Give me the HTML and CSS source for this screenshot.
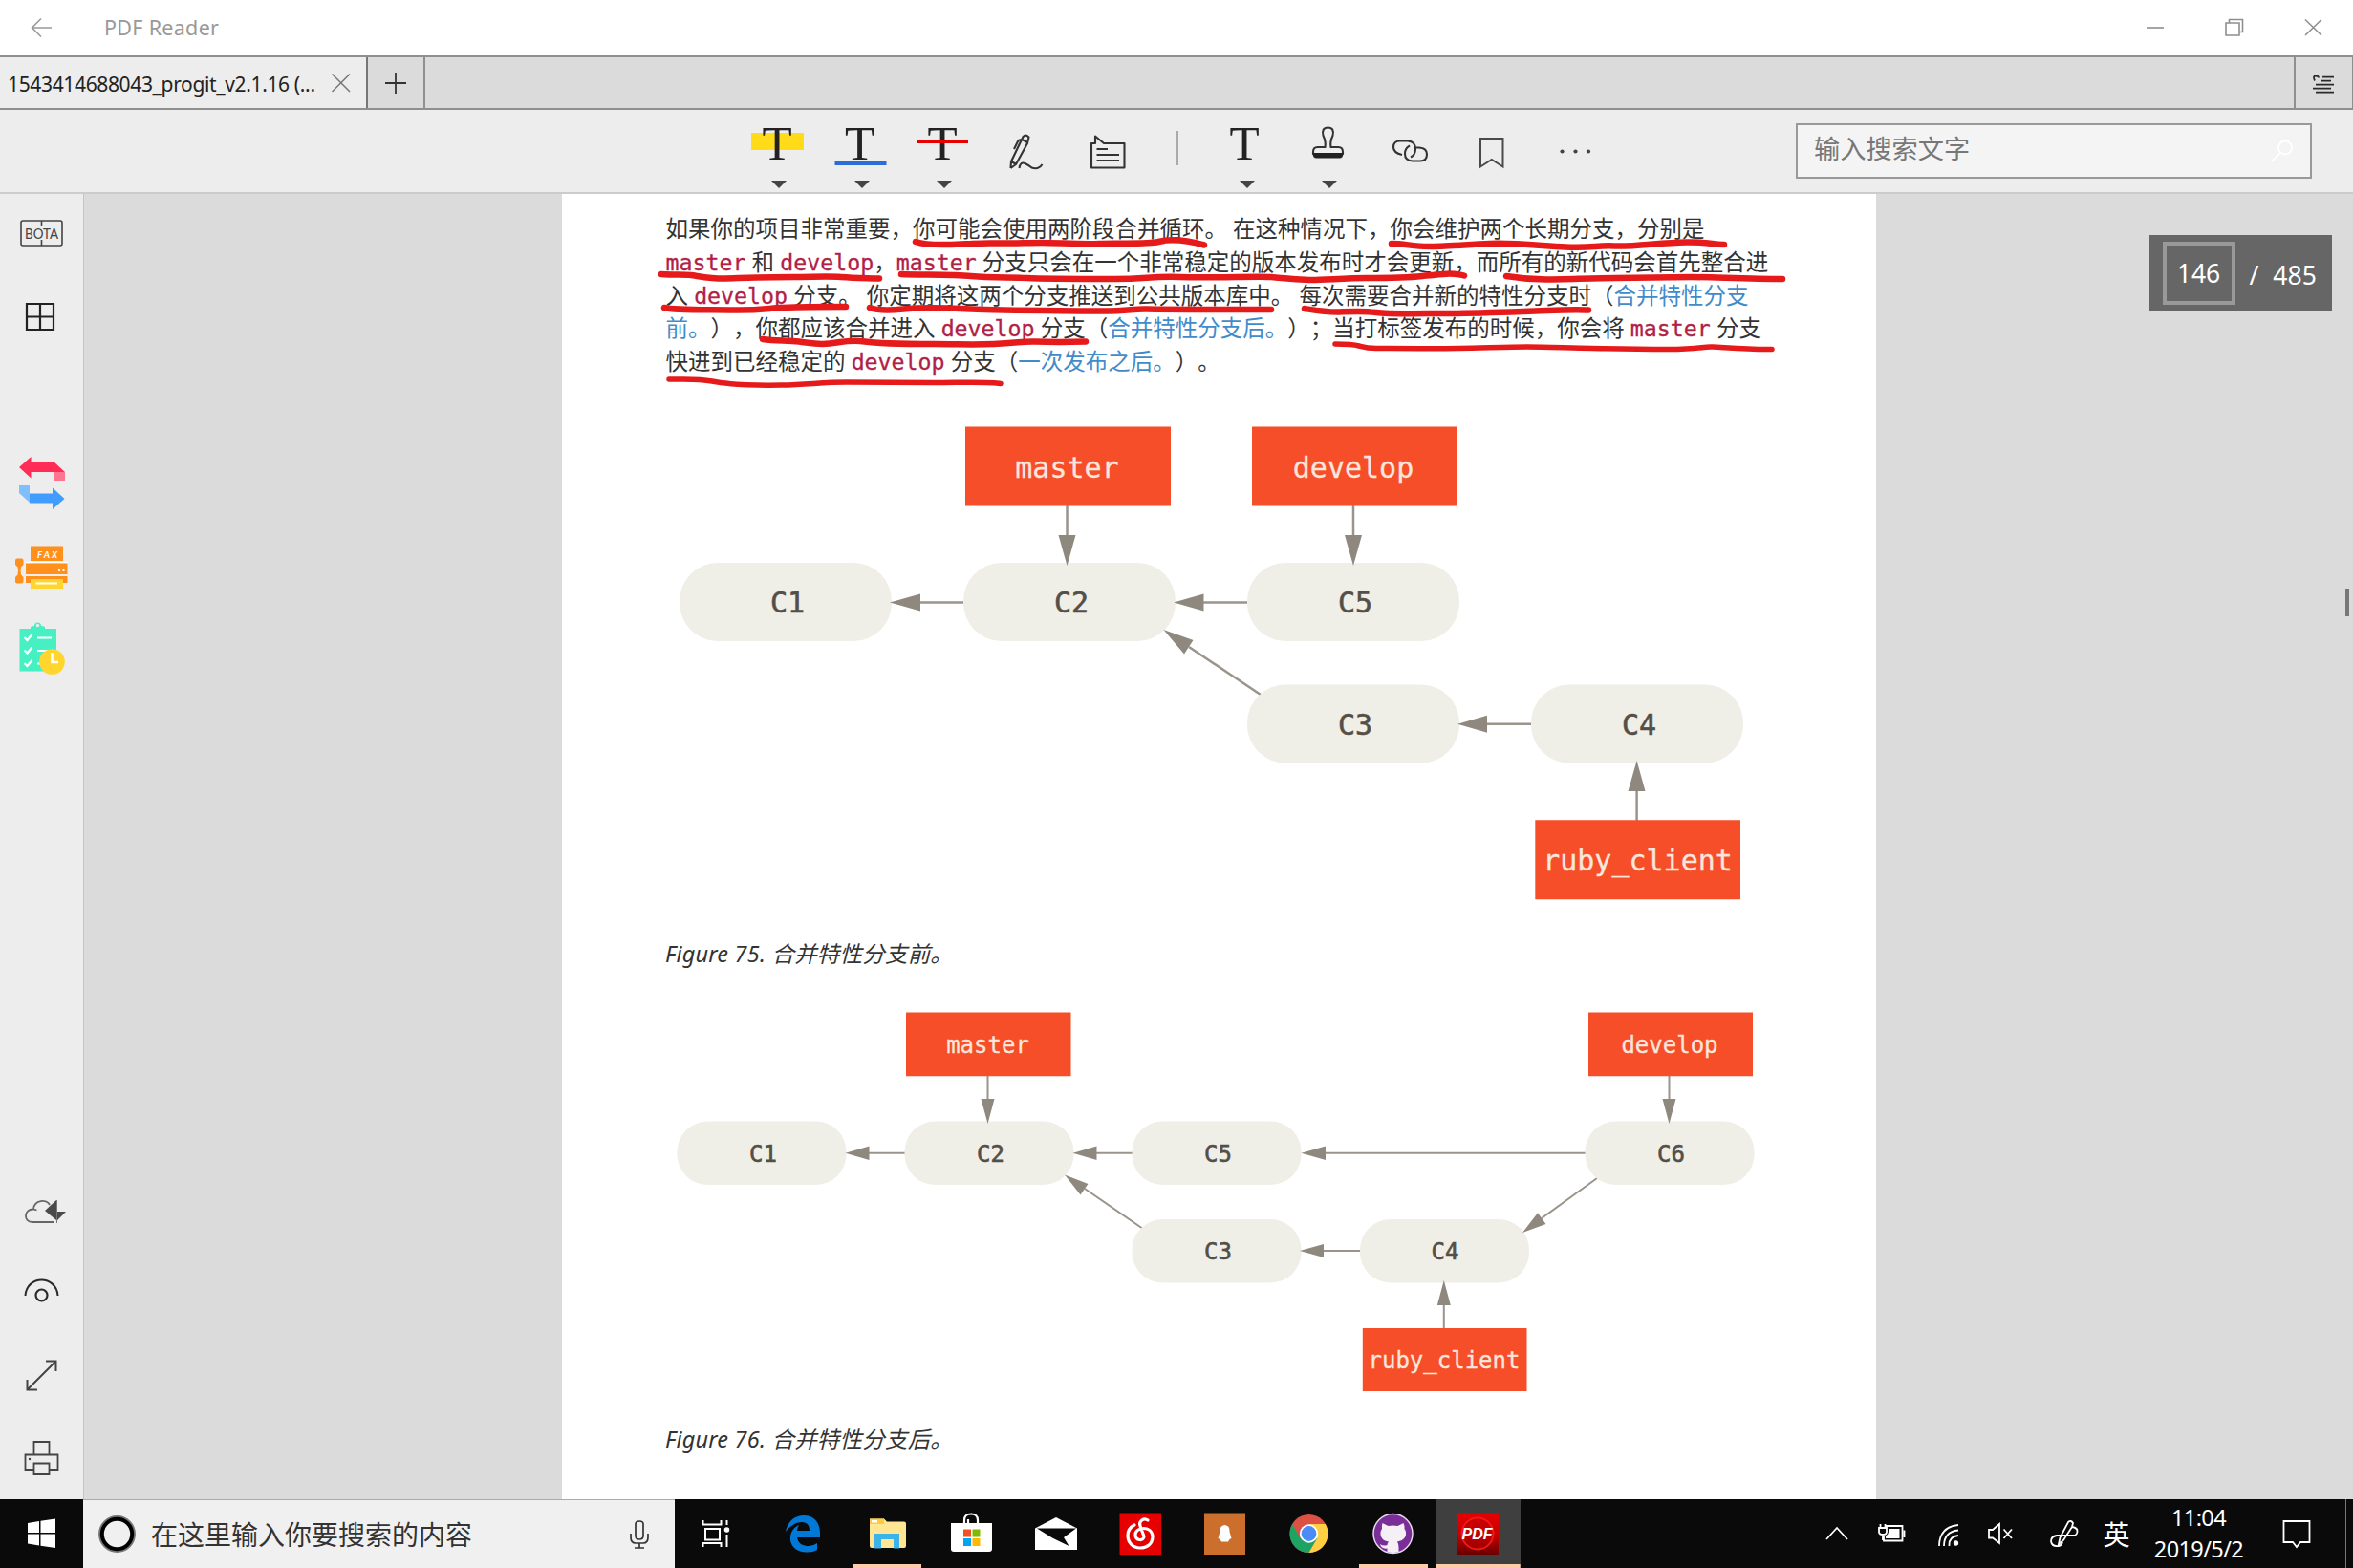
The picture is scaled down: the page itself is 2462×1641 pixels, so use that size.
FILE: index.html
```html
<!DOCTYPE html>
<html lang="zh-CN">
<head>
<meta charset="utf-8">
<title>PDF Reader</title>
<link rel="stylesheet" href="styles.css">
</head>
<body>
<div class="app">
  <header class="titlebar">
    <svg class="back" width="109" height="58" viewBox="0 0 109 58"><path d="M54 29H34M43 19.500L33.500 29L43 38.500" fill="none" stroke="#999" stroke-width="1.600"/></svg>
    <span class="app-name">PDF Reader</span>
    <svg class="window-buttons" width="246" height="58" viewBox="2216 0 246 58">
      <g fill="none" stroke="#8f8f8f" stroke-width="1.600">
        <path d="M2246 29H2264"/>
        <path d="M2329 24H2343V37H2329ZM2332.500 24V20.500H2346.500V33.500H2343"/>
        <path d="M2412 20.500L2429 37M2429 20.500L2412 37"/>
      </g>
    </svg>
  </header>

  <nav class="tabs">
    <div class="tab">
      <span class="tab-title">1543414688043_progit_v2.1.16 (...</span>
      <svg width="20" height="20" viewBox="0 0 20 20"><path d="M.5 .5L19 19M19 .5L.5 19" stroke="#777" stroke-width="1.500"/></svg>
    </div>
    <div class="tab-add"><svg width="22" height="22" viewBox="0 0 22 22"><path d="M0 11H22M11 0V22" stroke="#333" stroke-width="1.800"/></svg></div>
    <div class="tab-menu">
      <svg width="24" height="22" viewBox="2419 78 24 22"><path d="M2430 80.700H2442M2428 84.700H2439M2423 88.700H2442M2420 92.700H2439M2423 96.700H2442M2422 84.500Q2419.500 79.500 2423 79.500Q2426 79.500 2426 81.500" fill="none" stroke="#2a2a2a" stroke-width="1.800"/></svg>
    </div>
  </nav>

  <div class="toolbar">
    <svg class="tool" viewBox="771 115 86.500 87"><path d="M786 139H841V157H786Z" fill="#ffdb1a"/><text class="glyph" x="813" y="167">T</text><path class="caret" d="M807 189H823L815 197Z"/></svg>
    <svg class="tool" viewBox="857.500 115 86.500 87"><text class="glyph" x="899" y="167">T</text><path d="M873 169H927V173H873Z" fill="#2b6fd6"/><path class="caret" d="M893.500 189H909.500L901.500 197Z"/></svg>
    <svg class="tool" viewBox="944 115 86.500 87"><text class="glyph" x="986" y="167">T</text><path d="M959 146.500H1013V150H959Z" fill="#e60000"/><path class="caret" d="M980 189H996L988 197Z"/></svg>
    <svg class="tool" viewBox="1030.500 115 86.500 87"><g class="line"><path d="M1057 176L1057.500 169L1070 143Q1073 140 1076 143.500L1074.500 150L1062.500 172L1057 176M1057.500 169L1063 172M1069 146L1074.500 149M1069 146Q1065 145.500 1064 149L1060.500 156"/><path d="M1066 176Q1067 169 1072 171Q1076 173 1079 175.500Q1086 178 1090 172"/></g></svg>
    <svg class="tool" viewBox="1117 115 86.500 87"><g class="line"><path d="M1142 150H1146V142.500L1155 150H1176.500V175.500H1142Z"/><path d="M1147.500 156H1159M1147.500 162H1171M1147.500 168H1171"/></g></svg>
    <div class="tool-divider"></div>
    <svg class="tool" viewBox="1260 115 86.500 87"><text class="glyph" x="1302" y="167">T</text><path class="caret" d="M1297 189H1313L1305 197Z"/></svg>
    <svg class="tool" viewBox="1347.500 115 86.500 87"><g class="line"><path d="M1387 154Q1388 148 1385 142Q1383 133.500 1390 133.500Q1397 133.500 1395 142Q1392 148 1393 154H1401Q1405.500 154 1405.500 159V161H1374.500V159Q1374.500 154 1379 154Z"/></g><path d="M1374 160H1406Q1406 165.500 1402 165.500H1378Q1374 165.500 1374 160Z" fill="#222"/><path class="caret" d="M1383.500 189H1399.500L1391.500 197Z"/></svg>
    <svg class="tool" viewBox="1434 115 86.500 87"><g class="line"><path d="M1468 162Q1459 160 1459 154Q1459 147.500 1466 147.500H1474Q1482 148 1482 156Q1482 162 1477 164.500"/><path d="M1480 154.500H1486Q1494 155 1494 161.500Q1494 168.500 1487 168.500H1479Q1471 168 1471 161Q1471 155 1476 152.500"/></g></svg>
    <svg class="tool" viewBox="1520.500 115 86.500 87"><path d="M1549.500 145H1573V174.500L1561.300 167L1549.500 174.500Z" fill="none" stroke="#4a4a4a" stroke-width="2"/></svg>
    <svg class="tool" viewBox="1606.500 115 86.500 87"><g fill="#444"><circle cx="1635" cy="158.500" r="2.100"/><circle cx="1649" cy="158.500" r="2.100"/><circle cx="1662.500" cy="158.500" r="2.100"/></g></svg>
    <div class="search">
      <span>输入搜索文字</span>
      <svg width="24" height="24" viewBox="0 0 24 24"><circle cx="15" cy="8.500" r="7" fill="none" stroke="#fff" stroke-width="1.800"/><path d="M10 14L1 23" stroke="#fff" stroke-width="1.800"/></svg>
    </div>
  </div>

  <div class="workspace">
    <aside class="sidebar">
      <svg width="87" height="84" viewBox="0 203 87 84"><path d="M24 231H63Q65 231 65 233V255Q65 257 63 257H24Q22 257 22 255V233Q22 231 24 231ZM43.500 231V236M43.500 251V257" fill="none" stroke="#444" stroke-width="1.600"/><text class="bota" x="43.500" y="249.800" textLength="35" lengthAdjust="spacingAndGlyphs">BOTA</text></svg>
      <svg width="87" height="90" viewBox="0 287 87 90"><path d="M28 318H56V345H28ZM42 318V345M28 331.500H56" fill="none" stroke="#222" stroke-width="2.200"/></svg>
      <svg class="convert" width="87" height="88" viewBox="0 460 87 88"><path d="M57 484L68 494V503H57Z" fill="#ff7590"/><path d="M20 489L32.500 478V484H57L67.500 494H32.500V500.500Z" fill="#ff2d55"/><path d="M20 508H31V526L20 516Z" fill="#80bfff"/><path d="M31 516.500H55V510.500L67.500 522L55 533V526.500H31Z" fill="#409cff"/></svg>
      <svg width="87" height="86" viewBox="0 548 87 86"><path d="M32 571.500H66V587H32Z" fill="#ff901c"/><text class="fax" x="49.500" y="583.500" textLength="21">FAX</text><path d="M27 588.500H71" stroke="#fff" stroke-width="1.500"/><path d="M27 589.500H70.500V601H27ZM27 603H70.500V610H27ZM16 586.500Q16 584.500 18 584.500H22.500Q24.500 584.500 24.500 586.500V591L22 593.500Q21 597 22 601.500L24.500 604V608.500Q24.500 610.500 22.500 610.500H18Q16 610.500 16 608.500V604L18.500 601.500Q19.500 597 18.500 593.500L16 591Z" fill="#ff901c"/><path d="M32 606H66V616H32Z" fill="#ffd52e"/><path d="M37.500 610.500H60" stroke="#fff" stroke-width="2"/><path d="M61 597H63M65.500 597H67.500" stroke="#fff" stroke-width="1.800"/></svg>
      <svg width="87" height="90" viewBox="0 634 87 90"><path d="M20.500 658H32V656Q34 655 36 655A3.500 3.500 0 0 1 43 655Q45 655 47 656V658H59V702.500H20.500Z" fill="#47f0c2"/><circle cx="39.500" cy="654.500" r="1.700" fill="#ededed"/><path d="M25.500 667L28.500 670L33.500 664M25.500 680.500L28.500 683.500L33.500 677.500M25.500 694L28.500 697L33.500 691M39 667.500H54M39 681H50M39 694.500H42" fill="none" stroke="#fff" stroke-width="2.200"/><circle cx="54.500" cy="692.500" r="13.300" fill="#ffd52e"/><path d="M54.500 683V693H61" fill="none" stroke="#fff" stroke-width="2.500"/></svg>
      <svg class="cloud" width="87" height="84" viewBox="0 1226 87 84"><path d="M57 1279H34C24 1279 25 1265 35 1265.500L38.500 1266.500M35 1265.500C36 1255 49 1255 52 1261" fill="none" stroke="#666" stroke-width="1.800"/><path d="M47 1267L59 1256V1277ZM60 1268H69L60 1277Z" fill="#4a4a4a"/><path d="M59.500 1256V1280" stroke="#777" stroke-width="1"/></svg>
      <svg width="87" height="84" viewBox="0 1310 87 84"><path d="M26.500 1356C28 1334 59 1334 60.500 1356" fill="none" stroke="#2a2a2a" stroke-width="2"/><circle cx="43.500" cy="1355.500" r="6" fill="none" stroke="#2a2a2a" stroke-width="2.200"/></svg>
      <svg width="87" height="88" viewBox="0 1394 87 88"><path d="M29 1454L58.500 1424.500M48 1424.500H58.500V1435M28.500 1444V1454.500H39" fill="none" stroke="#444" stroke-width="2"/></svg>
      <svg width="87" height="87" viewBox="0 1482 87 87"><path d="M35.500 1522V1509H51.500V1522M35 1538H26.500V1522.500H60.500V1538H52M35.500 1531.500H51.500V1543H35.500Z" fill="none" stroke="#444" stroke-width="1.800"/><circle cx="31" cy="1527" r="1.200" fill="#444"/></svg>
    </aside>

    <main class="viewer">
      <article class="page">
        <div class="prose">
          <p>如果你的项目非常重要，你可能会使用两阶段合并循环。 在这种情况下，你会维护两个长期分支，分别是</p>
          <p><code>master</code> 和 <code>develop</code>，<code>master</code> 分支只会在一个非常稳定的版本发布时才会更新，而所有的新代码会首先整合进</p>
          <p>入 <code>develop</code> 分支。 你定期将这两个分支推送到公共版本库中。 每次需要合并新的特性分支时（<a>合并特性分支</a></p>
          <p><a>前。</a>），你都应该合并进入 <code>develop</code> 分支（<a>合并特性分支后。</a>）；当打标签发布的时候，你会将 <code>master</code> 分支</p>
          <p>快进到已经稳定的 <code>develop</code> 分支（<a>一次发布之后。</a>）。</p>
        </div>
        <figure>
          <svg class="diagram" width="1375" height="570" viewBox="588 410 1375 570">
            <g class="edges">
              <path d="M1116.500 529V562M1416 529V562M962 630.500H1008M1258 630.500H1305M1244 677L1319 727M1555 757.700H1603M1712.600 826V859"/>
            </g>
            <g class="commits">
              <rect x="711" y="589" width="222" height="82" rx="40"/><rect x="1008" y="589" width="222" height="82" rx="40"/><rect x="1305" y="589" width="222" height="82" rx="40"/><rect x="1305" y="716.500" width="222" height="82" rx="40"/><rect x="1602" y="716.500" width="222" height="82" rx="40"/>
            </g>
            <g class="heads"><path d="M1107.500 560H1125.500L1116.500 592ZM1407 560H1425L1416 592ZM963 621.500V639.500L931 630.500ZM1259.500 621.500V639.500L1228 630.500ZM1217.500 659L1248.500 670L1239 684.500ZM1556 748.700V766.700L1525 757.700ZM1703.500 828H1721.500L1712.600 796Z"/></g>
            <g class="refs"><path d="M1010 446.500H1225V529.500H1010ZM1310 446.500H1524.500V529.500H1310ZM1606.300 858.300H1821V941.300H1606.300Z"/></g>
            <g class="ref-names"><text x="1116.500" y="499.500">master</text><text x="1416" y="499.500">develop</text><text x="1713.500" y="910.800">ruby_client</text></g>
            <g class="commit-names"><text x="824" y="641">C1</text><text x="1121" y="641">C2</text><text x="1418" y="641">C5</text><text x="1418" y="768.500">C3</text><text x="1715" y="768.500">C4</text></g>
          </svg>
          <figcaption>Figure 75. 合并特性分支前。</figcaption>
        </figure>
        <figure>
          <svg class="diagram small" width="1375" height="470" viewBox="588 1018 1375 470">
            <g class="edges">
              <path d="M1033.500 1126V1152M1746.500 1126V1152M908 1206.700H947M1146 1206.700H1185M1385 1206.700H1659M1384 1309H1423M1135 1244L1196 1286M1671 1233L1613 1275M1510.800 1364V1391"/>
            </g>
            <g class="commits">
              <rect x="708.500" y="1173.500" width="177" height="66.500" rx="32"/><rect x="946.500" y="1173.500" width="177" height="66.500" rx="32"/><rect x="1184.500" y="1173.500" width="177" height="66.500" rx="32"/><rect x="1658.500" y="1173.500" width="177" height="66.500" rx="32"/><rect x="1184.500" y="1276" width="177" height="66.500" rx="32"/><rect x="1423" y="1276" width="177" height="66.500" rx="32"/>
            </g>
            <g class="heads"><path d="M1026.500 1150H1040.500L1033.500 1176ZM1739.500 1150H1753.500L1746.500 1176ZM909.500 1199.500V1214L884.500 1206.700ZM1147.500 1199.500V1214L1122.500 1206.700ZM1387 1199.500V1214L1361.500 1206.700ZM1385 1302V1316L1360 1309ZM1114 1229.500L1138.500 1239L1130.500 1250.500ZM1593 1290L1609 1269.300L1617.500 1281ZM1503.800 1366H1517.800L1510.800 1340Z"/></g>
            <g class="refs"><path d="M948 1059.500H1120.500V1126.300H948ZM1662 1059.500H1834V1126.300H1662ZM1425.800 1390H1597.500V1456H1425.800Z"/></g>
            <g class="ref-names"><text x="1033.500" y="1102">master</text><text x="1747" y="1102">develop</text><text x="1511" y="1432.300">ruby_client</text></g>
            <g class="commit-names"><text x="798.500" y="1216">C1</text><text x="1036.500" y="1216">C2</text><text x="1274.500" y="1216">C5</text><text x="1748.500" y="1216">C6</text><text x="1274.500" y="1317.800">C3</text><text x="1512" y="1317.800">C4</text></g>
          </svg>
          <figcaption>Figure 76. 合并特性分支后。</figcaption>
        </figure>
        <svg class="ink" width="1375" height="240" viewBox="588 203 1375 240">
          <path d="M958 253C970 257 985 256 995 256S1025 254 1040 254.500S1075 254 1090 254S1135 256 1150 255S1200 256 1212 253S1240 251 1260 256.500"/>
          <path d="M1456 255C1470 255 1478 258 1495 258S1535 256 1559 255S1610 257 1638 258.500S1670 256.500 1689 257.500S1737 254 1764 253.500S1790 256 1804 256"/>
          <path d="M692 287C705 288 715 287 723 288S745 292 760 291.500S810 290 830 290S866 289 880 290S905 291 920 291.500"/>
          <path d="M943 287C960 288 995 287 1016 289S1060 290 1075 291S1130 292 1166 292S1202 289 1235 290S1320 289 1330 290S1360 293 1373 293S1409 291 1430 291S1470 291 1488 289S1520 285 1532 288.500"/>
          <path d="M1576 289C1588 291 1600 292.500 1618 292.500S1670 291 1690 291S1750 290 1770 290S1830 292 1865 292"/>
          <path d="M695 322C706 325 740 324 767 324.500S805 322.500 818 322S870 321 885 321"/>
          <path d="M910 322C918 325 935 324.500 945 323.500S985 322 1016 323.500S1100 325 1143 325.500S1180 323 1200 323.500S1310 324 1330 324"/>
          <path d="M1365 323C1378 325 1390 327 1401 326.500S1425 325 1440 327S1490 328 1511 328S1567 327 1606 325.500S1640 324 1662 324.500"/>
          <path d="M798 355C812 357 824 356 836 357.500S855 361 868 359.500S890 355 905 357.500S950 360 977 360S1015 361 1040 360S1070 357 1083 357.500S1120 358 1136 357.500"/>
          <path class="thin" d="M1397 360C1408 360 1415 360 1422 362S1430 364.500 1440 364.500S1500 365 1527 364.500S1580 363 1598 363S1640 364 1666 364.500S1710 365.500 1745 365.500S1780 362.500 1792 363S1830 366 1854 365.500"/>
          <path class="thin" d="M700 397C715 397 730 396 745 399S790 403.500 818 403S860 400 886 400S950 400.500 977 400.500S1035 399 1047 401.500"/>
        </svg>
      </article>
      <div class="page-counter"><span class="current">146</span><span class="slash">/</span><span>485</span></div>
      <div class="scroll-thumb"></div>
    </main>
  </div>

  <footer class="taskbar">
    <svg width="87" height="72" viewBox="0 1569 87 72"><path d="M29 1594L41 1592V1604H29ZM42.500 1591.700L58 1589.500V1604H42.500ZM29 1605.500H41V1617.500L29 1615.500ZM42.500 1605.500H58V1620L42.500 1617.800Z" fill="#fff"/></svg>
    <div class="cortana">
      <svg width="40" height="40" viewBox="0 0 40 40"><circle cx="19.500" cy="19.500" r="18.200" fill="none" stroke="#777" stroke-width="2.500"/><circle cx="19.500" cy="19.500" r="15.700" fill="none" stroke="#000" stroke-width="4"/></svg>
      <span>在这里输入你要搜索的内容</span>
      <svg class="mic" width="22" height="32" viewBox="658 1589 22 32"><path d="M665 1594Q665 1591 669 1591Q673 1591 673 1594V1606Q673 1610 669 1610Q665 1610 665 1606ZM660 1604V1608Q660 1614 665 1614H673Q678 1614 678 1608V1604M669 1614V1619M664 1619H674" fill="none" stroke="#333" stroke-width="1.700"/></svg>
    </div>
    <svg width="90" height="72" viewBox="706 1569 90 72"><g fill="none" stroke="#fff" stroke-width="2"><path d="M735.500 1591V1595.500H754.500V1591M738 1600H753V1611.500H738ZM735.500 1619V1615H754.500V1619M760.500 1591V1596M760.500 1606V1619"/></g><circle cx="760.500" cy="1601" r="2.800" fill="#fff"/></svg>
    <div class="task"><svg width="88" height="72" viewBox="796 1569 88 72"><path d="M822 1603C824 1592 832 1585.500 842 1586C853 1586.500 858 1595 858 1604V1609H834C835 1616 841 1618 846 1618Q851 1618 855 1615V1622Q850 1625 843 1624.500C831 1624 826 1616 827 1608C828 1601 832 1598 836 1596Q834 1599 834 1602H847C847 1597 845 1593 839 1593C832 1593 826 1598 822 1603Z" fill="#0078d7"/></svg></div>
    <div class="task running"><svg width="88" height="72" viewBox="884 1569 88 72"><path d="M910 1589.500H925L928 1592.500H946Q948 1592.500 948 1594.500V1618Q948 1620 946 1620H912Q910 1620 910 1618Z" fill="#ffe693"/><path d="M910 1589.500H925V1595H910Z" fill="#ffcb3d"/><path d="M912 1591H918V1593.500H912Z" fill="#fff"/><path d="M915 1605H941V1620.500H935V1611H922V1620.500H915Z" fill="#3cb4ea"/></svg></div>
    <div class="task"><svg width="88" height="72" viewBox="973 1569 88 72"><path d="M1009 1595V1591Q1009 1584.500 1016 1584.500Q1023 1584.500 1023 1591V1595M1013 1595V1590" fill="none" stroke="#fff" stroke-width="2.200"/><path d="M995 1594H1038V1621Q1038 1624 1035 1624H998Q995 1624 995 1621Z" fill="#fff"/><path d="M1008 1600.500H1016V1608.500H1008Z" fill="#f25022"/><path d="M1017.500 1600.500H1025.500V1608.500H1017.500Z" fill="#7fba00"/><path d="M1008 1610H1016V1618H1008Z" fill="#00a4ef"/><path d="M1017.500 1610H1025.500V1618H1017.500Z" fill="#ffb900"/></svg></div>
    <div class="task"><svg width="88" height="72" viewBox="1061 1569 88 72"><path d="M1083 1599.500L1105 1588L1127 1599.500V1622H1083Z" fill="#fff"/><path d="M1085 1599.500H1126L1113 1609L1118.500 1618L1101 1609.500Z" fill="#0a0a0a"/></svg></div>
    <div class="task"><svg width="88" height="72" viewBox="1149 1569 88 72"><path d="M1171.500 1583.500H1215V1627H1171.500Z" fill="#e60000"/><path d="M1201 1591C1197 1588 1191 1592 1193 1597L1197 1608C1197 1613 1188 1613 1188 1606C1188 1598 1205 1596 1206 1608C1206 1616 1200 1620 1193 1620C1185 1620 1180 1614 1180 1607C1180 1601 1183 1598 1187 1596" fill="none" stroke="#fff" stroke-width="3.200" stroke-linecap="round"/></svg></div>
    <div class="task"><svg width="88" height="72" viewBox="1238 1569 88 72"><path d="M1260 1583.500H1303V1627H1260Z" fill="#cc6e2c"/><path d="M1281.500 1596Q1287 1596.500 1286.500 1603L1288.500 1610L1286.500 1611L1285 1613.500H1278L1276.500 1611L1274.500 1610L1276.500 1603Q1276 1596.500 1281.500 1596Z" fill="#fff"/></svg></div>
    <div class="task"><svg width="88" height="72" viewBox="1326.500 1569 88 72"><circle cx="1370" cy="1605" r="20" fill="#dd5144"/><path d="M1352.700 1595A20 20 0 0 0 1370 1625L1378.700 1610L1361.300 1610Z" fill="#1da462"/><path d="M1387.300 1595A20 20 0 0 1 1370 1625L1378.700 1610L1370 1595Z" fill="#ffce42"/><circle cx="1370" cy="1605" r="9.700" fill="#fff"/><circle cx="1370" cy="1605" r="7.900" fill="#4b8bf5"/></svg></div>
    <div class="task running"><svg width="88" height="72" viewBox="1414.500 1569 88 72"><circle cx="1458" cy="1605" r="20.500" fill="#7b2d98" stroke="#e6d9ec" stroke-width="1.500"/><path d="M1447 1594L1453 1597Q1458 1596 1463 1597L1469 1594Q1470.500 1597 1470 1600Q1473 1604 1470.500 1609Q1468 1612.500 1462.500 1613.500Q1464 1616 1464 1619V1624Q1458 1626 1452 1624V1620.500Q1446 1621.500 1444.500 1616Q1448 1618.500 1452 1617Q1452 1615 1453.500 1613.500Q1447 1612.500 1445.500 1608Q1444 1603 1446.500 1600Q1446 1597 1447 1594Z" fill="#f4f0f6"/></svg></div>
    <div class="task active"><svg width="88" height="72" viewBox="1503 1569 88 72"><defs><linearGradient id="pdf" x1="0" y1="0" x2="0" y2="1"><stop offset="0" stop-color="#e80000"/><stop offset="0.550" stop-color="#c40000"/><stop offset="1" stop-color="#680000"/></linearGradient></defs><path d="M1524 1583.500H1568V1627H1524Z" fill="url(#pdf)"/><circle cx="1546" cy="1605" r="16.500" fill="#b50000" fill-opacity=".5" stroke="#f01818" stroke-width="2"/><text class="pdf" x="1545.500" y="1611" textLength="32" lengthAdjust="spacingAndGlyphs">PDF</text></svg></div>
    <div class="tray">
      <svg width="57" height="72" viewBox="1893 1569 57 72"><path d="M1911 1611L1922 1599L1933 1611"/></svg>
      <svg width="60" height="72" viewBox="1950 1569 60 72"><path d="M1973 1597H1990.500V1612.500H1971V1607M1992.500 1601.500V1609M1966 1599H1974V1603Q1974 1606 1970 1606Q1966 1606 1966 1603ZM1967.500 1595V1599M1972.500 1595V1599M1970 1606V1612"/><path d="M1976 1600H1987.500V1610H1973V1607.500Q1976 1606 1976 1602Z" fill="#fff" stroke="none"/></svg>
      <svg width="56" height="72" viewBox="2010 1569 56 72"><path d="M2029 1618Q2029 1598 2049 1596M2034 1618Q2034 1603 2049 1601.500M2039.500 1618Q2039 1608 2049 1607"/><circle cx="2046.500" cy="1615" r="2.700" fill="#fff" stroke="none"/></svg>
      <svg width="58" height="72" viewBox="2066 1569 58 72"><path d="M2081 1601H2085L2092 1595V1615L2085 1609.500H2081ZM2096.500 1600.500L2105 1610M2105 1600.500L2096.500 1610"/></svg>
      <svg width="62" height="72" viewBox="2124 1569 62 72"><path d="M2154 1616L2155.500 1609L2164 1593Q2167 1590.500 2169 1594L2168 1598L2159 1612ZM2168 1598Q2174 1599 2173.500 1603Q2173 1607 2169 1607H2152Q2146 1608 2146 1613Q2147 1619 2154 1618Q2157 1617.500 2158 1614"/></svg>
      <span class="ime">英</span>
      <div class="clock"><span>11:04</span><span>2019/5/2</span></div>
      <svg width="86" height="72" viewBox="2360 1569 86 72"><path d="M2389.500 1592H2416.500V1614H2407L2403 1619L2399 1614H2389.500Z"/></svg>
      <div class="show-desktop"></div>
    </div>
  </footer>
</div>
</body>
</html>
```
FILE: styles.css
```css
* { box-sizing: border-box; }
body {
  margin: 0;
  background: #fff;
  font-family: "Noto Sans", "Noto Sans CJK SC", sans-serif;
}
svg { display: block; flex: none; }
.app { width: 2462px; height: 1641px; display: flex; flex-direction: column; overflow: hidden; }

.titlebar { height: 58px; display: flex; align-items: center; background: #fff; }
.app-name { color: #999; font-size: 21.5px; letter-spacing: .3px; padding-bottom: 1px; }
.window-buttons { margin-left: auto; }

.tabs { height: 57px; display: flex; background: #dbdbdb; border-top: 2px solid #8f8f8f; border-bottom: 2px solid #8f8f8f; border-right: 1px solid #8f8f8f; }
.tab { width: 385px; display: flex; align-items: center; background: #ededed; border-right: 2px solid #777; padding-left: 8px; }
.tab-title { width: 339px; font-size: 21px; color: #222; white-space: nowrap; letter-spacing: -.35px; padding-top: 2px; }
.tab-add { width: 60px; display: flex; align-items: center; justify-content: center; border-right: 2px solid #8f8f8f; }
.tab-menu { width: 61px; margin-left: auto; border-left: 2px solid #8f8f8f; display: flex; align-items: center; justify-content: center; padding: 4px 1px 0 0; }

.toolbar { height: 88px; display: flex; background: #ededed; border-bottom: 2px solid #ccc; padding-left: 771px; }
.tool { width: 86.5px; height: 87px; }
.tool .glyph { font-family: "Liberation Serif", serif; font-size: 51px; fill: #222; text-anchor: middle; }
.tool .caret { fill: #444; }
.tool .line { fill: none; stroke: #333; stroke-width: 2.1; stroke-linejoin: round; }
.tool-divider { width: 2px; height: 36px; margin: 22px 27px 0 27.5px; background: #aaa; }
.search { width: 540px; height: 58px; margin: 14px 0 0 186.5px; border: 2px solid #999; background: #f4f4f4; color: #777; font-size: 27.2px; display: flex; align-items: center; padding: 0 17px; justify-content: space-between; }
.search span { padding-bottom: 8px; }

.workspace { flex: 1; min-height: 0; display: flex; background: #dbdbdb; }
.sidebar { width: 88px; display: flex; flex-direction: column; background: #ededed; border-right: 1px solid #c4c4c4; }
.sidebar .convert { margin-top: 83px; }
.sidebar .cloud { margin-top: auto; }
.bota { font-family: Lato, sans-serif; font-size: 16px; fill: #444; text-anchor: middle; }
.fax { font-family: Lato, sans-serif; font-size: 9.5px; font-weight: bold; font-style: italic; fill: #fff; text-anchor: middle; }

.viewer { flex: 1; position: relative; }
.page { position: relative; width: 1375px; height: 100%; margin-left: 500px; background: #fff; overflow: hidden; }
.prose { padding: 19px 0 0 108.5px; height: 207px; font-size: 23.5px; color: #333; text-spacing-trim: space-all; }
.prose p { margin: 0; height: 34.8px; line-height: 34.8px; white-space: nowrap; }
.prose code { font-family: "DejaVu Sans Mono", monospace; font-size: 23.25px; line-height: 1; color: #b12146; -webkit-text-stroke: .3px #b12146; }
.prose a { color: #428bca; }
figure { margin: 0; }
figcaption { height: 38px; line-height: 37px; padding-left: 108px; font-size: 23.5px; font-style: italic; color: #333; letter-spacing: .2px; }
.edges { fill: none; stroke: #9a948b; stroke-width: 2.5; }
.small .edges { stroke-width: 2; }
.commits { fill: #efeee7; }
.heads { fill: #8f887f; }
.refs { fill: #f64e28; }
.diagram text { font-family: "DejaVu Sans Mono", monospace; font-size: 30px; text-anchor: middle; }
.diagram.small text { font-size: 24px; }
.ref-names { fill: #fae6dd; stroke: #fae6dd; stroke-width: .3; }
.commit-names { fill: #544e47; stroke: #544e47; stroke-width: .6; }
.ink { position: absolute; left: 0; top: 0; fill: none; stroke: #e61a1a; stroke-width: 6.5; stroke-linecap: round; stroke-linejoin: round; }
.ink .thin { stroke-width: 5.5; }

.page-counter { position: absolute; right: 22px; top: 43px; width: 191.5px; height: 80px; background: #666; color: #fff; font-size: 26.5px; display: flex; align-items: center; padding-left: 14px; }
.page-counter .current { width: 76px; height: 66px; border: 4px solid #999; line-height: 58px; text-align: center; margin-right: 15px; }
.page-counter .slash { margin-right: 15px; }
.page-counter span:not(.current) { padding-top: 3px; }
.scroll-thumb { position: absolute; right: 4px; top: 413px; width: 4px; height: 29px; background: #777; }

.taskbar { height: 72px; display: flex; background: #0a0a0a; }
.cortana { width: 619px; display: flex; align-items: center; background: #f0f0f0; border-top: 1px solid #aaa; padding-left: 16px; color: #333; font-size: 28px; }
.cortana span { margin-left: 15px; padding-bottom: 2px; }
.cortana .mic { margin-left: auto; margin-right: 26px; }
.task { width: 88.3px; display: flex; justify-content: center; }
.task.running { background: linear-gradient(#ffcba8, #ffcba8) center bottom / 72px 4px no-repeat; }
.task.active { background: #3f3f3f linear-gradient(#ffcba8, #ffcba8) center bottom / 100% 4px no-repeat; }
.pdf { font-family: "Liberation Sans", sans-serif; font-size: 16px; font-weight: bold; font-style: italic; fill: #fff; text-anchor: middle; }
.tray { margin-left: auto; display: flex; align-items: center; color: #fff; }
.tray svg { fill: none; stroke: #fff; stroke-width: 1.8; }
.ime { width: 57px; text-align: center; font-size: 28px; padding-bottom: 1px; }
.clock { width: 117px; display: flex; flex-direction: column; align-items: center; font-size: 23.5px; line-height: 33px; letter-spacing: -.6px; padding-right: 2px; }
.show-desktop { width: 16px; height: 72px; display: flex; border-left: 8px solid transparent; }
.show-desktop::before { content: ""; width: 1px; background: #777; }
```
